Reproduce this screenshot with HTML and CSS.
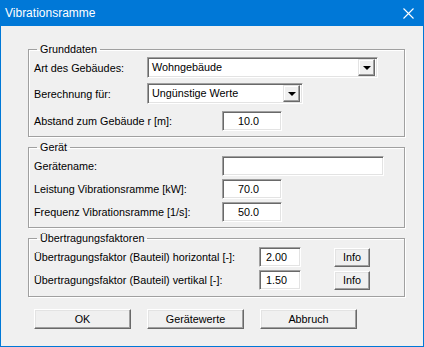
FILE: index.html
```html
<!DOCTYPE html>
<html lang="de">
<head>
    <meta charset="UTF-8">
    <title>Vibrationsramme</title>
    <link rel="stylesheet" href="styles.css">
</head>
<body>
    <div class="window">
        <div class="titlebar">
            <span class="title">Vibrationsramme</span>
            <svg class="close" width="11" height="11" viewBox="0 0 11 11">
                <path d="M0.5 0.5 L10.5 10.5 M10.5 0.5 L0.5 10.5" stroke="#fff" stroke-width="1.1" fill="none"/>
            </svg>
        </div>

        <div class="dialog">
            <fieldset class="group group-basic">
                <legend>Grunddaten</legend>
                <div class="row row-combo">
                    <label class="lbl lbl-short">Art des Gebäudes:</label>
                    <div class="combo combo-wide">
                        <span class="combo-text">Wohngebäude</span>
                        <span class="combo-btn"><i class="arrow"></i></span>
                    </div>
                </div>
                <div class="row row-combo row-second">
                    <label class="lbl lbl-short">Berechnung für:</label>
                    <div class="combo combo-mid">
                        <span class="combo-text">Ungünstige Werte</span>
                        <span class="combo-btn"><i class="arrow"></i></span>
                    </div>
                </div>
                <div class="row row-third">
                    <label class="lbl lbl-mid">Abstand zum Gebäude r [m]:</label>
                    <div class="edit edit-num">10.0</div>
                </div>
            </fieldset>

            <fieldset class="group group-device">
                <legend>Gerät</legend>
                <div class="row">
                    <label class="lbl lbl-mid">Gerätename:</label>
                    <div class="edit edit-name"></div>
                </div>
                <div class="row">
                    <label class="lbl lbl-mid">Leistung Vibrationsramme [kW]:</label>
                    <div class="edit edit-num">70.0</div>
                </div>
                <div class="row">
                    <label class="lbl lbl-mid">Frequenz Vibrationsramme [1/s]:</label>
                    <div class="edit edit-num">50.0</div>
                </div>
            </fieldset>

            <fieldset class="group group-factors">
                <legend>Übertragungsfaktoren</legend>
                <div class="row">
                    <label class="lbl lbl-long">Übertragungsfaktor (Bauteil) horizontal [-]:</label>
                    <div class="edit edit-small">2.00</div>
                    <button class="btn btn-info">Info</button>
                </div>
                <div class="row">
                    <label class="lbl lbl-long">Übertragungsfaktor (Bauteil) vertikal [-]:</label>
                    <div class="edit edit-small">1.50</div>
                    <button class="btn btn-info">Info</button>
                </div>
            </fieldset>

            <div class="buttons">
                <button class="btn btn-main">OK</button>
                <button class="btn btn-main">Gerätewerte</button>
                <button class="btn btn-main">Abbruch</button>
            </div>
        </div>
    </div>
</body>
</html>
```

FILE: styles.css
```css
:root {
    --title-blue: #0078d7;
    --face: #f0f0f0;
    --shadow: #a0a0a0;
    --dark-shadow: #696969;
    --light: #e3e3e3;
}

* {
    margin: 0;
    padding: 0;
    box-sizing: border-box;
}

html, body {
    width: 424px;
    height: 347px;
    overflow: hidden;
    background: var(--face);
}

body {
    font-family: 'Liberation Sans', Arial, sans-serif;
    font-size: 10.8px;
    color: #000;
}

.window {
    width: 424px;
    height: 347px;
    border: 1px solid var(--title-blue);
    border-top: none;
    background: var(--face);
}

/* Title bar */
.titlebar {
    height: 26px;
    margin: 0 -1px;
    background: var(--title-blue);
    display: flex;
    align-items: center;
    justify-content: space-between;
    padding: 0 10px 0 5px;
}

.title {
    color: #fff;
    font-size: 12px;
}

.close {
    display: block;
    margin-top: 1px;
}

/* Dialog body */
.dialog {
    padding: 17px 18px 0 27px;
}

.group {
    border: 1px solid var(--shadow);
    box-shadow: inset 1px 1px 0 #fff, 1px 1px 0 #fff;
    padding: 1px 4px 5px 5px;
}

.group legend {
    line-height: 13px;
    padding: 0 3px;
    margin-left: 3px;
}

.group-device,
.group-factors {
    margin-top: 4px;
    padding-top: 2px;
}

.group-factors {
    padding-bottom: 6px;
}

.row {
    display: flex;
    align-items: center;
    height: 20px;
}

.row + .row {
    margin-top: 3px;
}

.row-combo {
    height: 21px;
}

.row.row-second {
    margin-top: 5px;
}

.row.row-third {
    margin-top: 7px;
}

.lbl {
    flex: none;
    white-space: nowrap;
}

.lbl-short { width: 113px; }
.lbl-mid { width: 188px; }
.lbl-long { width: 225px; }

/* Sunken edit fields */
.edit,
.combo {
    height: 20px;
    background: #fff;
    border-top: 1px solid var(--shadow);
    border-left: 1px solid var(--shadow);
    border-right: 1px solid #fff;
    border-bottom: 1px solid #fff;
    box-shadow: inset 1px 1px 0 var(--dark-shadow), inset -1px -1px 0 var(--light);
    line-height: 18px;
    white-space: nowrap;
}

.edit-num {
    width: 60px;
    padding-left: 15px;
}

.edit-name {
    width: 162px;
}

.edit-small {
    width: 42px;
    padding-left: 6px;
}

/* Combo boxes */
.combo {
    height: 21px;
    display: flex;
    align-items: center;
    padding: 2px;
}

.combo-wide { width: 231px; }
.combo-mid { width: 156px; }

.combo-text {
    flex: 1;
    padding-left: 2px;
    line-height: 17px;
}

.combo-btn {
    width: 17px;
    height: 17px;
    background: var(--face);
    border-top: 1px solid var(--light);
    border-left: 1px solid var(--light);
    border-right: 1px solid var(--dark-shadow);
    border-bottom: 1px solid var(--dark-shadow);
    box-shadow: inset -1px -1px 0 var(--shadow), inset 1px 1px 0 #fff;
    display: flex;
    align-items: center;
    justify-content: center;
}

.arrow {
    width: 0;
    height: 0;
    border-left: 4px solid transparent;
    border-right: 4px solid transparent;
    border-top: 4px solid #000;
    margin-top: 1px;
}

/* Push buttons */
.btn {
    font-family: inherit;
    font-size: inherit;
    color: #000;
    background: var(--face);
    border-top: 1px solid #fff;
    border-left: 1px solid #fff;
    border-right: 1px solid var(--dark-shadow);
    border-bottom: 1px solid var(--dark-shadow);
    box-shadow: inset -1px -1px 0 var(--shadow), inset 1px 1px 0 var(--light);
    height: 20px;
    line-height: 16px;
}

.btn-info {
    width: 36px;
    height: 19px;
    margin-left: 33px;
}

.buttons {
    display: flex;
    gap: 16px;
    margin-top: 12px;
    padding-left: 6px;
}

.btn-main {
    width: 97px;
}
```
